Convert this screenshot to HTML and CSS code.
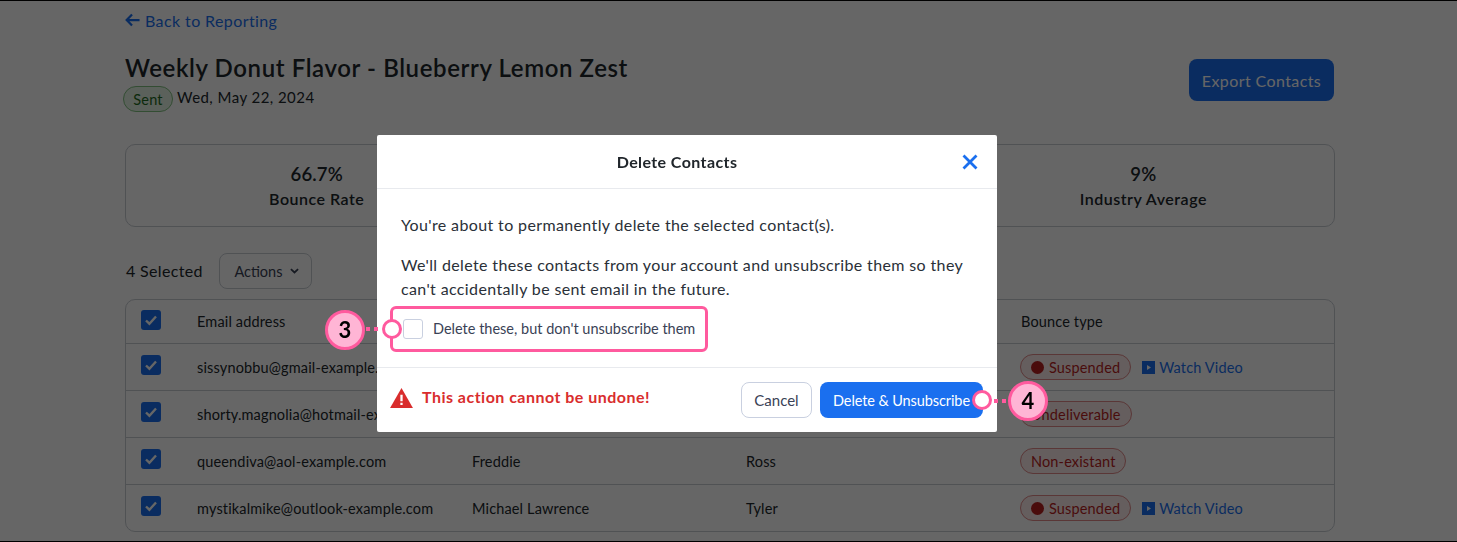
FILE: index.html
```html
<!DOCTYPE html>
<html lang="en">
<head>
    <meta charset="UTF-8">
    <title>Delete Contacts</title>
    <link rel="stylesheet" href="styles.css">
</head>
<body>
<div class="page">
    <a class="backLink" href="#">
        <svg class="backArrow" viewBox="0 0 16 14" width="15" height="14"><path d="M7.5 1.2 1.8 7l5.7 5.8M2 7h13.5" fill="none" stroke="currentColor" stroke-width="2.4"/></svg>
        Back to Reporting
    </a>
    <div class="titleRow">
        <div>
            <h1>Weekly Donut Flavor - Blueberry Lemon Zest</h1>
            <div class="sentRow"><span class="sentTag">Sent</span><span class="sentDate">Wed, May 22, 2024</span></div>
        </div>
        <button type="button" class="exportBtn">Export Contacts</button>
    </div>
    <div class="statsCard">
        <div class="stat"><b>66.7%</b><strong>Bounce Rate</strong></div>
        <div class="stat"></div>
        <div class="stat"><b>9%</b><strong>Industry Average</strong></div>
    </div>
    <div class="selectRow">
        <span class="selectCount">4 Selected</span>
        <button type="button" class="actionsBtn">Actions
            <svg viewBox="0 0 10 6" width="9" height="6"><path d="M1 1l4 3.6L9 1" fill="none" stroke="currentColor" stroke-width="2"/></svg>
        </button>
    </div>
    <div class="contactTable">
        <div class="tableRow headRow">
            <span class="tick"><svg viewBox="0 0 20 20"><path d="M5 10.5l3.4 3.2L15 6.5" fill="none" stroke="#fff" stroke-width="2.4"/></svg></span>
            <span>Email address</span><span></span><span></span><span>Bounce type</span>
        </div>
        <div class="tableRow">
            <span class="tick"><svg viewBox="0 0 20 20"><path d="M5 10.5l3.4 3.2L15 6.5" fill="none" stroke="#fff" stroke-width="2.4"/></svg></span>
            <span>sissynobbu@gmail-example.com</span><span></span><span></span>
            <span class="bounceCell">
                <span class="bounceTag"><i class="infoDot"></i>Suspended</span>
                <a class="videoLink" href="#"><svg viewBox="0 0 13 13" width="13" height="13"><path d="M0 0h13v13H0z" fill="currentColor"/><path d="M5 4l4 2.5L5 9z" fill="#fff"/></svg>Watch Video</a>
            </span>
        </div>
        <div class="tableRow">
            <span class="tick"><svg viewBox="0 0 20 20"><path d="M5 10.5l3.4 3.2L15 6.5" fill="none" stroke="#fff" stroke-width="2.4"/></svg></span>
            <span>shorty.magnolia@hotmail-example.com</span><span></span><span></span>
            <span class="bounceCell"><span class="bounceTag">Undeliverable</span></span>
        </div>
        <div class="tableRow">
            <span class="tick"><svg viewBox="0 0 20 20"><path d="M5 10.5l3.4 3.2L15 6.5" fill="none" stroke="#fff" stroke-width="2.4"/></svg></span>
            <span>queendiva@aol-example.com</span><span>Freddie</span><span>Ross</span>
            <span class="bounceCell"><span class="bounceTag">Non-existant</span></span>
        </div>
        <div class="tableRow">
            <span class="tick"><svg viewBox="0 0 20 20"><path d="M5 10.5l3.4 3.2L15 6.5" fill="none" stroke="#fff" stroke-width="2.4"/></svg></span>
            <span>mystikalmike@outlook-example.com</span><span>Michael Lawrence</span><span>Tyler</span>
            <span class="bounceCell">
                <span class="bounceTag"><i class="infoDot"></i>Suspended</span>
                <a class="videoLink" href="#"><svg viewBox="0 0 13 13" width="13" height="13"><path d="M0 0h13v13H0z" fill="currentColor"/><path d="M5 4l4 2.5L5 9z" fill="#fff"/></svg>Watch Video</a>
            </span>
        </div>
    </div>
</div>

<div class="overlay">
    <div class="modal">
        <div class="modalHead">
            <span>Delete Contacts</span>
            <svg class="closeIcon" viewBox="0 0 16 16" width="16" height="16"><path d="M1.5 1.5l13 13M14.5 1.5l-13 13" fill="none" stroke="#1a6fef" stroke-width="2.8"/></svg>
        </div>
        <div class="modalBody">
            <p>You're about to permanently delete the selected contact(s).</p>
            <p>We'll delete these contacts from your account and unsubscribe them so they can't accidentally be sent email in the future.</p>
            <div class="checkRow">
                <span class="emptyBox"></span>
                <span>Delete these, but don't unsubscribe them</span>
                <span class="step stepLeft">3</span>
                <span class="dots dotsLeft"></span>
                <span class="ring ringLeft"></span>
            </div>
        </div>
        <div class="modalFoot">
            <svg class="warnIcon" viewBox="0 0 24 21" width="23" height="20"><path d="M12 0 24 21H0z" fill="#d92d2d"/><path d="M10.8 7h2.4v7h-2.4zM10.8 15.5h2.4v2.4h-2.4z" fill="#fff"/></svg>
            <span class="warnText">This action cannot be undone!</span>
            <button type="button" class="cancelBtn">Cancel</button>
            <button type="button" class="deleteBtn">Delete &amp; Unsubscribe
                <span class="ring ringRight"></span>
                <span class="dots dotsRight"></span>
                <span class="step stepRight">4</span>
            </button>
        </div>
    </div>
</div>
</body>
</html>
```

FILE: styles.css
```css
* {
    box-sizing: border-box;
}

html, body {
    margin: 0;
    height: 100%;
    overflow: hidden;
}

body {
    font-family: "Lato", "Liberation Sans", sans-serif;
    font-size: 14.5px;
    letter-spacing: 0.15px;
    color: #20262b;
    background-color: #fff;
}

.page {
    height: 542px;
    padding: 10px 122px 0 125px;
}

.backLink {
    display: flex;
    align-items: center;
    gap: 5px;
    height: 20px;
    color: #1a6fef;
    font-size: 16px;
    letter-spacing: 0.4px;
    text-decoration: none;
}

.titleRow {
    display: flex;
    justify-content: space-between;
    margin-top: 22px;
}

h1 {
    margin: 0;
    font-size: 24px;
    line-height: 32px;
    font-weight: 600;
    letter-spacing: 0.6px;
}

.sentRow {
    display: flex;
    align-items: center;
    gap: 4px;
    margin-top: 2px;
    margin-left: -2px;
    font-size: 15px;
}

.sentDate {
    margin-top: -4px;
    letter-spacing: 0.45px;
}

.sentTag {
    width: 50px;
    height: 26px;
    padding-top: 3px;
    border: 1px solid #7fc07f;
    border-radius: 13px;
    background-color: #e3f3e3;
    color: #1e6b1e;
    font-size: 14.5px;
    line-height: 19px;
    text-align: center;
}

.exportBtn {
    width: 145px;
    height: 42px;
    margin: 7px 1px 0 0;
    border: 0;
    border-radius: 8px;
    background-color: #1a6fef;
    color: #fff;
    font-family: inherit;
    font-size: 16px;
    letter-spacing: 0.4px;
}

.statsCard {
    display: grid;
    grid-template-columns: repeat(3, 1fr);
    grid-column-gap: 32px;
    height: 83px;
    margin-top: 32px;
    border: 1px solid #c8cdd3;
    border-radius: 10px;
}

.stat {
    display: flex;
    flex-direction: column;
    align-items: center;
    padding-top: 17px;
}

.stat b {
    font-size: 18.5px;
    line-height: 24px;
    font-weight: 600;
}

.stat strong {
    font-size: 16px;
    line-height: 25px;
    font-weight: 600;
    letter-spacing: 0.5px;
}

.selectRow {
    display: flex;
    align-items: center;
    gap: 16px;
    margin-top: 26px;
    margin-left: 1px;
    font-size: 16px;
    letter-spacing: 0.35px;
}

.selectCount {
    margin-bottom: 2px;
}

.actionsBtn {
    display: flex;
    align-items: center;
    justify-content: center;
    gap: 8px;
    width: 93px;
    height: 36px;
    padding-right: 3px;
    border: 1px solid #c8cdd3;
    border-radius: 8px;
    background-color: #fff;
    color: #3a4256;
    font-family: inherit;
    font-size: 14.5px;
    letter-spacing: 0;
}

.contactTable {
    height: 233px;
    margin-top: 10px;
    border: 1px solid #c8cdd3;
    border-radius: 10px;
}

.tableRow {
    display: grid;
    grid-template-columns: 71px 275px 274px 275px 1fr;
    align-items: center;
    height: 47px;
    border-top: 1px solid #c8cdd3;
}

.headRow {
    height: 43px;
    border-top: 0;
}

.tick {
    display: block;
    width: 20px;
    height: 20px;
    margin: 0 0 4px 15px;
    border-radius: 3px;
    background-color: #1a6fef;
}

.tick svg {
    display: block;
}

.bounceCell {
    display: flex;
    align-items: center;
    gap: 11px;
    margin-left: -1px;
}

.bounceTag {
    display: flex;
    align-items: center;
    gap: 5px;
    height: 26px;
    padding: 0 10px;
    border: 1px solid #e08a8a;
    border-radius: 13px;
    background-color: #fdeaea;
    color: #b81f1f;
}

.infoDot {
    display: block;
    width: 13px;
    height: 13px;
    border-radius: 50%;
    background-color: #b81f1f;
}

.videoLink {
    display: flex;
    align-items: center;
    gap: 4px;
    color: #1a6fef;
    text-decoration: none;
}

.overlay {
    position: fixed;
    top: 0;
    left: 0;
    width: 100%;
    height: 100%;
    padding: 135px 0 0 377px;
    border: 1px solid #000;
    border-left: 0;
    border-right: 0;
    background-color: rgba(0, 0, 0, 0.6);
}

.modal {
    width: 620px;
    height: 297px;
    margin-top: -1px;
    border-radius: 2px;
    background-color: #fff;
}

.modalHead {
    position: relative;
    height: 54px;
    padding-right: 20px;
    border-bottom: 1px solid #e8eaee;
    font-size: 16px;
    font-weight: 700;
    letter-spacing: 0.4px;
    line-height: 54px;
    text-align: center;
}

.closeIcon {
    position: absolute;
    top: 19px;
    right: 19px;
}

.modalBody {
    height: 179px;
    padding: 24px 24px 0;
    border-bottom: 1px solid #e8eaee;
    font-size: 16px;
    letter-spacing: 0.37px;
    line-height: 24px;
    color: #2a3038;
}

.modalBody p {
    margin: 0 0 16px;
}

.checkRow {
    position: relative;
    display: flex;
    align-items: center;
    gap: 10px;
    width: 318px;
    height: 46px;
    margin: -11px 0 0 -11px;
    padding-left: 10px;
    border: 3px solid #ff5a9e;
    border-radius: 6px;
    color: #3a4256;
    font-size: 14.5px;
    letter-spacing: 0;
}

.emptyBox {
    width: 20px;
    height: 20px;
    border: 1px solid #c9d0e0;
    border-radius: 3px;
}

.modalFoot {
    display: flex;
    align-items: center;
    height: 64px;
    padding: 0 14px 0 13px;
}

.warnIcon {
    margin: 0 9px 4px 0;
}

.warnText {
    flex: 1;
    margin-bottom: 8px;
    color: #d92d2d;
    font-size: 16px;
    font-weight: 700;
    letter-spacing: 0.48px;
}

.cancelBtn {
    width: 71px;
    height: 36px;
    margin-right: 8px;
    border: 1px solid #c9d0e0;
    border-radius: 8px;
    background-color: #fff;
    color: #3a4256;
    font-family: inherit;
    font-size: 15px;
    letter-spacing: 0;
}

.deleteBtn {
    position: relative;
    width: 163px;
    height: 36px;
    padding: 0 0 0 13px;
    border: 0;
    border-radius: 8px;
    background-color: #1a6fef;
    color: #fff;
    font-family: inherit;
    font-size: 14.5px;
    letter-spacing: -0.1px;
    text-align: left;
}

.step {
    position: absolute;
    width: 40px;
    height: 40px;
    border: 3px solid #ff5a9e;
    border-radius: 50%;
    background-color: #ffb5d5;
    color: #000;
    font-size: 22px;
    font-weight: 700;
    letter-spacing: 0;
    line-height: 34px;
    text-align: center;
}

.ring {
    position: absolute;
    width: 20px;
    height: 20px;
    border: 3px solid #ff5a9e;
    border-radius: 50%;
    background-color: #fff;
}

.dots {
    position: absolute;
    width: 16px;
    height: 4px;
    background: repeating-linear-gradient(90deg, #ff5a9e 0 4px, transparent 4px 8px);
}

.stepLeft {
    top: 1px;
    left: -68px;
}

.dotsLeft {
    top: 18px;
    left: -27px;
}

.ringLeft {
    top: 10px;
    left: -11px;
}

.ringRight {
    top: 8px;
    right: -9px;
}

.dotsRight {
    top: 17px;
    right: -27px;
}

.stepRight {
    top: -1px;
    right: -65px;
}
```
